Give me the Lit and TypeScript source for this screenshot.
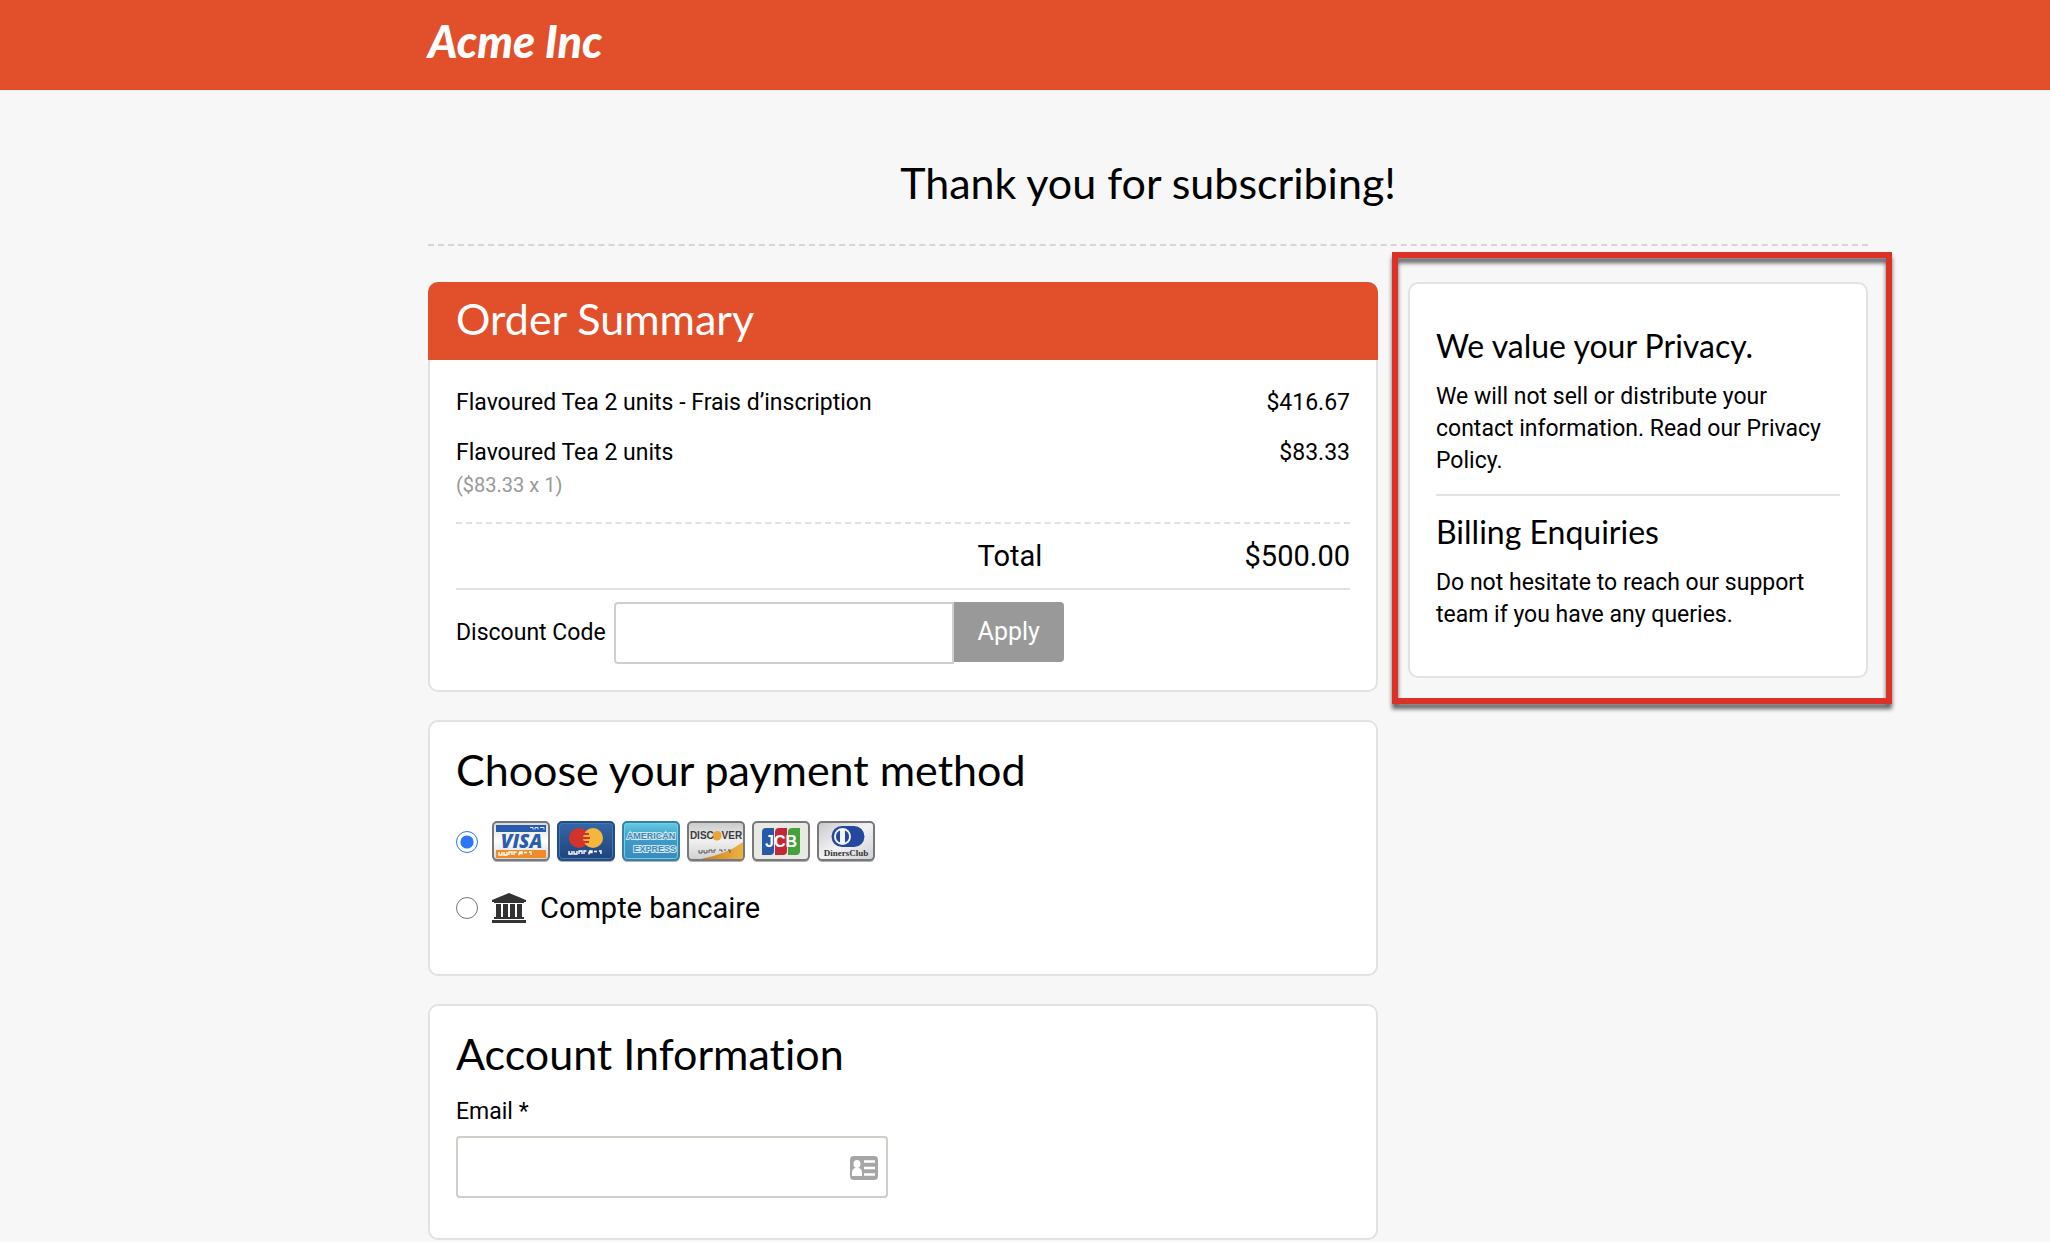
import { LitElement, css, html, svg } from "lit";
import { customElement, state } from "lit/decorators.js";

interface LineItem {
  name: string;
  detail?: string;
  amount: string;
}

const ITEMS: LineItem[] = [
  { name: "Flavoured Tea 2 units - Frais d’inscription", amount: "$416.67" },
  { name: "Flavoured Tea 2 units", detail: "($83.33 x 1)", amount: "$83.33" },
];

const frame = (fill: string, edge: string) => svg`
  <rect x="1" y="2" width="56" height="39" rx="4" fill="#000" opacity=".3"></rect>
  <rect x="1" y="1" width="56" height="38" rx="4" fill=${fill} stroke=${edge} stroke-width="2"></rect>`;

/* Row of embossed marks, the illegible lettering on the card faces. */
const emboss = (x: number, y: number) => svg`
  <path transform="translate(${x} ${y})" fill="none" stroke="#fff" stroke-width="1.4"
    d="M0 0v3h3v-3M5 0v3h3v-3M10 3v-3h3v3M15 3v-3h2.500M20 0h3v1.500h-3v2M25 0.500h3M30 0h2v3"></path>`;

const visa = html`<svg class="brand" viewBox="0 0 58 42" role="img" aria-label="Visa">
  <defs><linearGradient id="v" x2="0" y2="1"><stop stop-color="#d8d8d8"></stop><stop offset=".5" stop-color="#fff"></stop><stop offset="1" stop-color="#d4d4d4"></stop></linearGradient></defs>
  ${frame("url(#v)", "#77787c")}
  <rect x="4" y="4" width="50" height="7" fill="#2a5cae"></rect>
  <path d="M38 6.500h3v2M43 8.500v-2h3v2M48 6.500h4v2" fill="none" stroke="#dfe8f6" stroke-width="1"></path>
  <rect x="4" y="29" width="50" height="8" fill="#f08c28"></rect>
  ${emboss(7, 31)}
  <text x="29.500" y="27" text-anchor="middle" font-family="Open Sans, sans-serif" font-size="19" font-weight="800" font-style="italic" fill="#2b5dab">VISA</text>
</svg>`;

const mastercard = html`<svg class="brand" viewBox="0 0 58 42" role="img" aria-label="Mastercard">
  <defs><linearGradient id="m" x2="0" y2="1"><stop stop-color="#3568a8"></stop><stop offset="1" stop-color="#1f427a"></stop></linearGradient></defs>
  ${frame("url(#m)", "#264c84")}
  <rect x="2.500" y="2.500" width="53" height="35" rx="3" fill="none" stroke="#4079b8" stroke-width="1"></rect>
  <circle cx="22" cy="17" r="10" fill="#d2342c"></circle>
  <circle cx="36" cy="17" r="10" fill="#f4b73c"></circle>
  <path d="M26 13h6M25 17h8M26 21h6" stroke="#d2342c" stroke-width="2"></path>
  ${emboss(12, 30)}
</svg>`;

const amex = html`<svg class="brand" viewBox="0 0 58 42" role="img" aria-label="American Express">
  <defs><linearGradient id="a" x2="0" y2="1"><stop stop-color="#66cfe2"></stop><stop offset=".4" stop-color="#3f9dcb"></stop><stop offset="1" stop-color="#3889bd"></stop></linearGradient></defs>
  ${frame("url(#a)", "#3c7fa6")}
  <rect x="2.500" y="2.500" width="53" height="35" rx="3" fill="none" stroke="#68d3e6" stroke-width="1"></rect>
  <g font-family="Liberation Sans, sans-serif" font-weight="700" font-size="9" fill="#3f86b3" stroke="#cde8f2" stroke-width="2" paint-order="stroke">
    <text x="29" y="18" text-anchor="middle">AMERICAN</text>
    <text x="54" y="31" text-anchor="end">EXPRESS</text>
  </g>
</svg>`;

const discover = html`<svg class="brand" viewBox="0 0 58 42" role="img" aria-label="Discover">
  <defs>
    <linearGradient id="d" x2="0" y2="1"><stop stop-color="#c9c9c9"></stop><stop offset=".5" stop-color="#f0f0f0"></stop><stop offset="1" stop-color="#cfcfcf"></stop></linearGradient>
    <linearGradient id="o" x2="1" y2="0"><stop stop-color="#c97c1c"></stop><stop offset="1" stop-color="#eeb244"></stop></linearGradient>
  </defs>
  ${frame("url(#d)", "#77787c")}
  <path d="M14 38Q40 33 56 21V36Q56 38 54 38Z" fill="url(#o)"></path>
  <circle cx="30" cy="15" r="4.500" fill="#eaa43a"></circle>
  <text x="29" y="18" text-anchor="middle" font-family="Liberation Sans, sans-serif" font-size="10" font-weight="700" fill="#3c3c3c">DISC<tspan fill="#eaa43a">O</tspan>VER</text>
  <path d="M12 29v3h3v-3M17 29v3h3v-3M22 32v-3h3v3M27 32v-3h2M32 29h3v2M37 29h2M41 29h2v3" fill="none" stroke="#555" stroke-width="1"></path>
</svg>`;

const jcb = html`<svg class="brand" viewBox="0 0 58 42" role="img" aria-label="JCB">
  ${frame("#e9e9e3", "#77787c")}
  <path d="M14 7h8v23q0 4-4 4h-8V11q0-4 4-4Z" fill="#2958a8"></path>
  <path d="M27 7h8v23q0 4-4 4h-8V11q0-4 4-4Z" fill="#c42838"></path>
  <path d="M40 7h8v23q0 4-4 4h-8V11q0-4 4-4Z" fill="#42a23c"></path>
  <text x="29" y="26" text-anchor="middle" font-family="Liberation Sans, sans-serif" font-size="16" font-weight="700" fill="#fff">JCB</text>
</svg>`;

const diners = html`<svg class="brand" viewBox="0 0 58 42" role="img" aria-label="Diners Club">
  <defs><linearGradient id="c" x2="1" y2="1"><stop stop-color="#c8c8cc"></stop><stop offset=".5" stop-color="#f3f3f5"></stop><stop offset="1" stop-color="#cfcfd3"></stop></linearGradient></defs>
  ${frame("url(#c)", "#77787c")}
  <path d="M25 5h12a10.500 10.500 0 0 1 0 21H25a10.500 10.500 0 0 1 0-21Z" fill="#23489e"></path>
  <circle cx="25.500" cy="15.500" r="8.500" fill="#f2f4fa"></circle>
  <path d="M23 9.500a6.500 6.500 0 0 0 0 12ZM28 9.500a6.500 6.500 0 0 1 0 12Z" fill="#23489e"></path>
  <text x="29" y="35" text-anchor="middle" font-family="Liberation Serif, serif" font-size="9" font-weight="700" fill="#333">DinersClub</text>
</svg>`;

const bank = html`<svg class="bank" viewBox="0 0 34 30" aria-hidden="true">
  <path fill="#333" d="M17 0L34 7V9H0V7ZM2 9H32V10H2ZM4 11H9V24H4ZM11 11H16V24H11ZM18 11H23V24H18ZM25 11H30V24H25ZM2 24H32V26H2ZM0 27H34V30H0Z"></path>
</svg>`;

const contactCard = html`<svg class="contact" viewBox="0 0 28 24" aria-hidden="true">
  <rect width="28" height="24" rx="4" fill="#a6a6a6"></rect>
  <ellipse cx="7" cy="8" rx="3.500" ry="4" fill="#fff"></ellipse>
  <path d="M2 20v-3q0-4 3-5h4q3 1 3 5v3Z" fill="#fff"></path>
  <path d="M14 5.500h11M14 12h11M14 18.500h11" stroke="#fff" stroke-width="2.500"></path>
</svg>`;

@customElement("app-root")
export class AppRoot extends LitElement {
  @state() private method = "card";

  static styles = css`
    :host {
      display: block;
      min-height: 100vh;
      background: #f7f7f7;
      color: #000;
      font: 23px/32px Roboto, "Liberation Sans", sans-serif;
    }
    * {
      box-sizing: border-box;
    }
    h1,
    h2,
    h3,
    p,
    dl,
    dd {
      margin: 0;
    }
    h1,
    h2,
    h3 {
      font-family: Lato, "Liberation Sans", sans-serif;
      font-weight: 400;
      font-variant-ligatures: none;
    }
    h1,
    h2 {
      font-size: 43px;
      line-height: 54px;
    }
    h3 {
      margin-bottom: 15px;
      font-size: 32px;
      line-height: 40px;
    }
    .topbar {
      display: flex;
      align-items: center;
      height: 90px;
      padding: 0 182px 8px 428px;
      background: #e24f2b;
    }
    .logo {
      color: #fff;
      font: italic 900 45px/50px Lato, sans-serif;
      text-decoration: none;
    }
    .page {
      padding: 0 182px 0 428px;
    }
    .title {
      margin-bottom: 36px;
      padding: 66px 0 34px;
      border-bottom: 2px dashed #d6d6d6;
      text-align: center;
    }
    .columns {
      display: grid;
      grid-template-columns: minmax(0, 95fr) minmax(0, 46fr);
      align-items: start;
      gap: 30px;
    }
    .main {
      display: grid;
      gap: 28px;
    }
    .card {
      padding: 21px 26px 0;
      border: 2px solid #e2e2e2;
      border-radius: 10px;
      background: #fff;
    }
    .order {
      padding: 0 26px 26px;
    }
    .order-title {
      margin: -2px -28px 18px;
      padding: 0 28px 4px;
      border-radius: 10px 10px 0 0;
      background: #e24f2b;
      color: #fff;
      line-height: 74px;
    }
    .items {
      width: 100%;
      padding-bottom: 12px;
      border-spacing: 0;
      border-bottom: 2px dashed #e2e2e2;
    }
    .items td {
      padding: 9px 0;
      vertical-align: top;
    }
    .detail {
      display: block;
      color: #999;
      font-size: 20px;
    }
    .items .amount {
      text-align: right;
    }
    .total {
      display: grid;
      grid-template-columns: 7fr 5fr;
      margin-bottom: 12px;
      border-bottom: 2px solid #e2e2e2;
      font-size: 29px;
      line-height: 64px;
    }
    .total-row {
      display: flex;
      grid-column: 2;
      justify-content: space-between;
    }
    .discount {
      display: flex;
      align-items: center;
    }
    .discount label {
      margin-right: 8px;
    }
    .field {
      height: 62px;
      padding: 0 16px;
      border: 2px solid #d0d0ca;
      border-radius: 4px;
      background: #fff;
      font: inherit;
    }
    .code {
      width: 340px;
      border-radius: 4px 0 0 4px;
    }
    .apply {
      align-self: flex-start;
      height: 60px;
      padding: 0 24px;
      border: 0;
      border-radius: 0 4px 4px 0;
      background: #999;
      color: #fff;
      font: 25px/32px Roboto, "Liberation Sans", sans-serif;
    }
    .payment {
      padding-bottom: 45px;
    }
    .options {
      display: grid;
      gap: 24px;
      margin: 24px 0 0;
      padding: 0;
      border: 0;
    }
    .option {
      display: flex;
      align-items: center;
      gap: 14px;
      height: 42px;
      font-size: 29px;
    }
    .option input {
      width: 22px;
      height: 22px;
      margin: 0;
      accent-color: #2a76f6;
    }
    .brands {
      display: flex;
      gap: 7px;
    }
    .brand {
      width: 58px;
      height: 42px;
    }
    .bank {
      width: 34px;
      height: 30px;
    }
    .account {
      padding-bottom: 40px;
    }
    .email-label {
      display: block;
      margin: 15px 0 8px;
    }
    .email {
      position: relative;
      width: 432px;
      max-width: 100%;
    }
    .email .field {
      display: block;
      width: 100%;
      padding-right: 48px;
    }
    .contact {
      position: absolute;
      top: 20px;
      right: 10px;
      width: 28px;
      height: 24px;
    }
    .side {
      position: relative;
      padding: 42px 26px 45px;
    }
    .marker {
      position: absolute;
      inset: -32px -26px -28px -18px;
      border: 6px solid #dc3127;
      filter: drop-shadow(0 5px 2px rgba(0, 0, 0, 0.6));
      pointer-events: none;
    }
    .rule {
      margin: 17px 0 16px;
      border: 0;
      border-top: 2px solid #e2e2e2;
    }
  `;

  private pick(event: Event) {
    this.method = (event.target as HTMLInputElement).value;
  }

  render() {
    return html`
      <header class="topbar"><a class="logo" href="#">Acme Inc</a></header>
      <main class="page">
        <h1 class="title">Thank you for subscribing!</h1>
        <div class="columns">
          <div class="main">
            <section class="card order">
              <h2 class="order-title">Order Summary</h2>
              <table class="items">
                <tbody>
                  ${ITEMS.map(
                    (item) => html`<tr>
                      <td>
                        ${item.name}
                        ${item.detail ? html`<span class="detail">${item.detail}</span>` : ""}
                      </td>
                      <td class="amount">${item.amount}</td>
                    </tr>`
                  )}
                </tbody>
              </table>
              <dl class="total">
                <div class="total-row">
                  <dt>Total</dt>
                  <dd>$500.00</dd>
                </div>
              </dl>
              <form class="discount" @submit=${(e: Event) => e.preventDefault()}>
                <label for="code">Discount Code</label>
                <input class="field code" id="code" type="text" />
                <button class="apply" type="submit">Apply</button>
              </form>
            </section>

            <section class="card payment">
              <h2 id="pay">Choose your payment method</h2>
              <fieldset class="options" aria-labelledby="pay" @change=${this.pick}>
                <label class="option">
                  <input type="radio" name="method" value="card" .checked=${this.method === "card"} />
                  <span class="brands">${visa}${mastercard}${amex}${discover}${jcb}${diners}</span>
                </label>
                <label class="option">
                  <input type="radio" name="method" value="bank" .checked=${this.method === "bank"} />
                  ${bank}
                  <span>Compte bancaire</span>
                </label>
              </fieldset>
            </section>

            <section class="card account">
              <h2>Account Information</h2>
              <label class="email-label" for="email">Email *</label>
              <div class="email">
                <input class="field" id="email" type="email" />
                ${contactCard}
              </div>
            </section>
          </div>

          <aside class="card side">
            <h3>We value your Privacy.</h3>
            <p>We will not sell or distribute your contact information. Read our Privacy Policy.</p>
            <hr class="rule" />
            <h3>Billing Enquiries</h3>
            <p>Do not hesitate to reach our support team if you have any queries.</p>
            <div class="marker"></div>
          </aside>
        </div>
      </main>
    `;
  }
}
